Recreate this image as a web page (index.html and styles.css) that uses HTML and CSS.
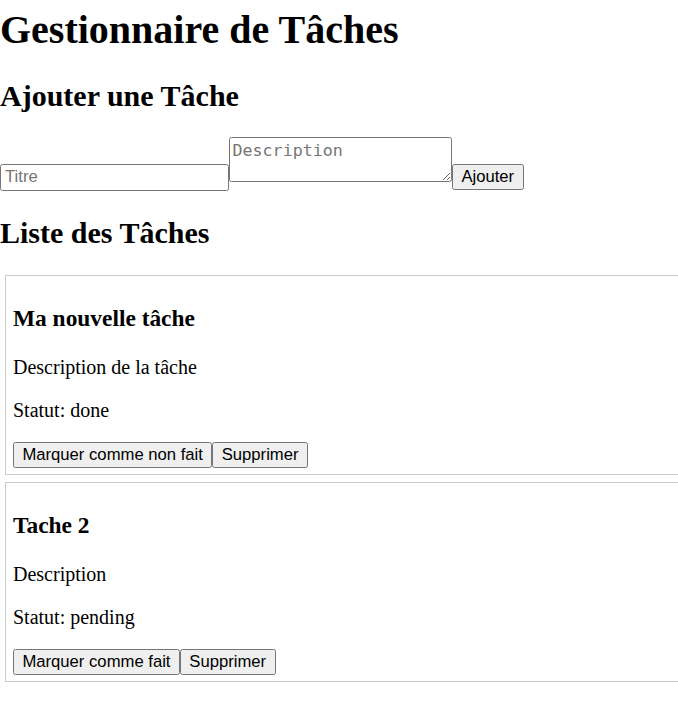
FILE: index.html
```html
<!DOCTYPE html>
<html lang="fr">
<head>
<meta charset="utf-8">
<title>Gestionnaire de Tâches</title>
<link rel="stylesheet" href="styles.css">
</head>
<body>
<h1 class="page-title">Gestionnaire de Tâches</h1>
<h2 class="section-title">Ajouter une Tâche</h2>
<form class="task-form"><input class="field field-title" type="text" placeholder="Titre"><textarea class="field field-desc" placeholder="Description"></textarea><button class="btn" type="button">Ajouter</button></form>
<h2 class="section-title">Liste des Tâches</h2>
<div class="task-list">
<div class="task-card"><h3 class="task-name">Ma nouvelle tâche</h3><p class="task-text">Description de la tâche</p><p class="task-text">Statut: done</p><div class="task-actions"><button class="btn" type="button">Marquer comme non fait</button><button class="btn" type="button">Supprimer</button></div></div>
<div class="task-card"><h3 class="task-name">Tache 2</h3><p class="task-text">Description</p><p class="task-text">Statut: pending</p><div class="task-actions"><button class="btn" type="button">Marquer comme fait</button><button class="btn" type="button">Supprimer</button></div></div>
</div>
</body>
</html>
```
FILE: styles.css
```css
body {
  margin: 0;
  font-family: "Liberation Serif", "Times New Roman", serif;
  font-size: 20px;
  color: #000;
  background: #fff;
  overflow-x: hidden;
}

.page-title {
  font-size: 40px;
  font-weight: bold;
  margin: 5.5px 0 26.8px;
}

.section-title {
  font-size: 30px;
  font-weight: bold;
  margin: 24.9px 0;
}

.task-form {
  margin: -1px 0 0;
  padding-bottom: 0.6px;
}

.field {
  font-family: "Liberation Sans", Arial, sans-serif;
  font-size: 16.67px;
  color: #000;
  background: #fff;
  border: 1px solid #767676;
  border-radius: 2.5px;
  box-sizing: border-box;
  margin: 0;
}

.field::placeholder {
  color: #757575;
}

.field-title {
  width: 229px;
  height: 27px;
  padding: 1px 4px;
}

.field-desc {
  width: 223px;
  height: 45px;
  padding: 2.5px;
  margin: 0;
  font-family: "DejaVu Sans Mono", monospace;
  font-size: 16.67px;
}

.btn {
  font-family: "Liberation Sans", Arial, sans-serif;
  font-size: 16.67px;
  color: #000;
  height: 26.25px;
  box-sizing: border-box;
  padding: 0 8.4px;
  margin: 0;
  background: #efefef;
  border: 1px solid #767676;
  border-radius: 2.5px;
}

.task-card {
  width: 100%;
  border: 1px solid #ccc;
  margin: 7px 0 7px 5px;
  padding: 6px 7px;
}

.task-name {
  font-size: 23.4px;
  font-weight: bold;
  margin: 23.4px 0;
}

.task-text {
  margin: 20px 0;
}
```
